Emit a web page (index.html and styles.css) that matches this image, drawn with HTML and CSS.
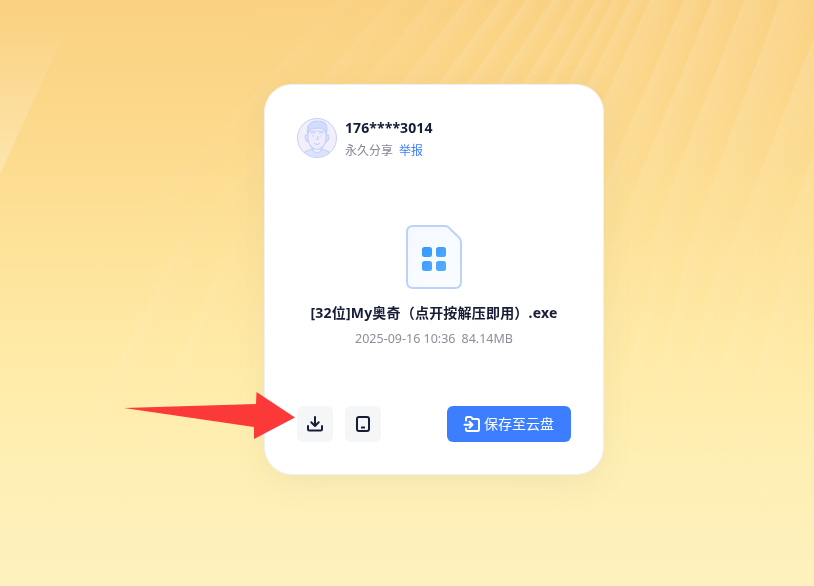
FILE: index.html
```html
<!DOCTYPE html>
<html lang="zh-CN">
<head>
<meta charset="utf-8">
<title>永久分享</title>
<link rel="stylesheet" href="styles.css">
</head>
<body>
<svg class="backdrop" viewBox="0 0 814 586" preserveAspectRatio="none" aria-hidden="true">
  <defs>
    <linearGradient id="ray"><stop stop-color="#fff" stop-opacity=".13"/><stop offset="1" stop-color="#fff" stop-opacity="0"/></linearGradient>
    <linearGradient id="edge" x1="0" y1="0" x2="0" y2="1">
      <stop offset=".12" stop-color="#fff" stop-opacity="0"/>
      <stop offset="1" stop-color="#fff" stop-opacity=".26"/>
    </linearGradient>
    <linearGradient id="topFade" x1="0" y1="0" x2="0" y2="1"><stop stop-color="#fff"/><stop offset=".2" stop-color="#eee"/><stop offset=".55" stop-color="#000"/></linearGradient>
    <linearGradient id="lowFade" x1="0" y1="0" x2="0" y2="1"><stop offset=".32" stop-color="#000"/><stop offset=".52" stop-color="#888"/><stop offset=".9" stop-color="#000"/></linearGradient>
    <mask id="topMask"><rect width="814" height="586" fill="url(#topFade)"/></mask>
    <mask id="lowMask"><rect width="814" height="586" fill="url(#lowFade)"/></mask>
  </defs>
  <path d="M0 0H72L66 30L0 174Z" fill="url(#edge)"/>
  <g mask="url(#topMask)" fill="url(#ray)">
    <rect width="30" height="400" transform="matrix(1 0 -.9 1 338 0)" opacity=".35"/>
    <rect width="34" height="400" transform="matrix(1 0 -.86 1 390 0)" opacity=".45"/>
    <rect width="30" height="400" transform="matrix(1 0 -.82 1 430 0)" opacity=".55"/>
    <rect width="26" height="400" transform="matrix(1 0 -.78 1 466 0)" opacity=".8"/>
    <rect width="20" height="400" transform="matrix(1 0 -.73 1 500 0)"/>
    <rect width="18" height="400" transform="matrix(1 0 -.7 1 526 0)"/>
    <rect width="18" height="400" transform="matrix(1 0 -.66 1 552 0)"/>
    <rect width="16" height="400" transform="matrix(1 0 -.62 1 575 0)"/>
    <rect width="14" height="400" transform="matrix(1 0 -.58 1 596 0)"/>
    <rect width="14" height="400" transform="matrix(1 0 -.54 1 613 0)"/>
    <rect width="20" height="400" transform="matrix(1 0 -.5 1 630 0)"/>
    <rect width="34" height="400" transform="matrix(1 0 -.46 1 650 0)"/>
    <rect width="28" height="400" transform="matrix(1 0 -.43 1 684 0)"/>
    <rect width="32" height="400" transform="matrix(1 0 -.41 1 712 0)"/>
    <rect width="36" height="400" transform="matrix(1 0 -.39 1 744 0)"/>
    <rect width="46" height="400" transform="matrix(1 0 -.37 1 780 0)"/>
    <rect width="48" height="400" transform="matrix(1 0 -.4 1 829 0)"/>
    <rect width="50" height="400" transform="matrix(1 0 -.38 1 872 0)"/>
  </g>
  <g mask="url(#lowMask)" fill="url(#ray)">
    <rect width="30" height="586" transform="matrix(1 0 -.5 1 300 0)"/>
    <rect width="30" height="586" transform="matrix(1 0 -.45 1 340 0)"/>
    <rect width="26" height="586" transform="matrix(1 0 -.25 1 690 0)"/>
    <rect width="26" height="586" transform="matrix(1 0 -.25 1 720 0)"/>
    <rect width="28" height="586" transform="matrix(1 0 -.26 1 754 0)"/>
    <rect width="30" height="586" transform="matrix(1 0 -.27 1 788 0)"/>
    <rect width="34" height="586" transform="matrix(1 0 -.28 1 824 0)"/>
    <rect width="36" height="586" transform="matrix(1 0 -.29 1 864 0)"/>
  </g>
</svg>

<main class="card">
  <header class="owner">
    <svg class="avatar" viewBox="0 0 40 40" aria-hidden="true">
      <clipPath id="disc"><circle cx="20" cy="20" r="19.5"/></clipPath>
      <circle cx="20" cy="20" r="19.5" fill="#f0effb"/>
      <g clip-path="url(#disc)" fill="#efedfb" stroke="#c4d0fb" stroke-width="1.2" stroke-linejoin="round" stroke-linecap="round">
        <path d="M5 37Q8 33 15 31Q20 37 25 31Q32 33 35 37V41H5Z" fill="#dde3fc"/>
        <path d="M15.500 29V32Q20 38 24.500 32V29" fill="#f0effb"/>
        <path d="M11 17Q7.500 16 8.200 20Q8.800 23.500 11.500 24M29 17Q32.500 16 31.800 20Q31.200 23.500 28.500 24" fill="#dde3fc"/>
        <path d="M11 13V21Q12 30.500 20 31.500Q28 30.500 29 21V13Z"/>
        <path d="M10.800 16Q9.500 10 12 7Q15 3 21 3.200Q28 3.200 29.500 8Q30.500 12 29.200 16L28 11.500Q24 9.500 17 10.500Q13 10.500 12 12.500Z" fill="#d3dcfc"/>
        <path d="M14 15Q16 13.800 17.500 15M22.500 15Q24 13.800 26 15M15.700 17.800H16.300M23.700 17.800H24.300M20.500 18.500L21 21.500H19.500M17.500 25.500Q20 27.500 22.500 25.500" fill="none"/>
      </g>
      <circle cx="20" cy="20" r="19.5" fill="none" stroke="#c5d0fb"/>
    </svg>
    <div class="owner-text">
      <div class="owner-name">176****3014</div>
      <div class="owner-meta"><span>永久分享</span><a class="report">举报</a></div>
    </div>
  </header>

  <section class="file">
    <svg class="file-icon" viewBox="0 0 56 64" aria-hidden="true">
      <defs>
        <linearGradient id="paper" x2="1" y2="1"><stop stop-color="#f5f9ff"/><stop offset="1" stop-color="#fafdff"/></linearGradient>
        <linearGradient id="tile" gradientUnits="userSpaceOnUse" x1="16" y1="22" x2="40" y2="46"><stop stop-color="#3399ff"/><stop offset="1" stop-color="#58acff"/></linearGradient>
      </defs>
      <path d="M7 1H39Q41 1 42.500 2.200L53 12.500Q55 14.500 55 17V57Q55 63 49 63H7Q1 63 1 57V7Q1 1 7 1Z" fill="url(#paper)" stroke="#bdd2fa" stroke-width="2"/>
      <g fill="url(#tile)">
        <rect x="16" y="22" width="10" height="10" rx="2.500"/>
        <rect x="30" y="22" width="10" height="10" rx="2.500"/>
        <rect x="16" y="36" width="10" height="10" rx="2.500"/>
        <rect x="30" y="36" width="10" height="10" rx="2.500"/>
      </g>
    </svg>
    <div class="file-name">[32位]My奥奇（点开按解压即用）.exe</div>
    <div class="file-meta"><span>2025-09-16 10:36</span><span>84.14MB</span></div>
  </section>

  <footer class="actions">
    <button class="tool" aria-label="下载">
      <svg viewBox="0 0 18 18"><path d="M9 2V10.700M5.300 7.300L9 11L12.700 7.300M2 11V14Q2 15.500 3.500 15.500H14.500Q16 15.500 16 14V11"/></svg>
    </button>
    <button class="tool" aria-label="手机">
      <svg viewBox="0 0 18 18"><rect x="3" y="2" width="12" height="14" rx="2"/><path d="M7 12.500H11" stroke-linecap="butt"/></svg>
    </button>
    <button class="save">
      <svg viewBox="0 0 18 18"><path d="M3 5.500V3.500Q3 2 4.500 2H7.500Q8.500 2 9 3L9.500 4H14.500Q16 4 16 5.500V14.500Q16 16 14.500 16H4.500Q3 16 3 14.500V13.500M1.500 9.800H9M6.500 6.800L9.500 9.800L6.500 12.800"/></svg>
      <span>保存至云盘</span>
    </button>
  </footer>
</main>

<svg class="pointer" viewBox="0 0 172 47" aria-hidden="true"><path d="M0 16L132 12L132.500 0L171 25.500L130 47L130 35Z"/></svg>
</body>
</html>
```
FILE: styles.css
```css
* { box-sizing: border-box; }

body {
  margin: 0;
  width: 814px;
  height: 586px;
  overflow: hidden;
  position: relative;
  padding: 84px 0 0 264px;
  font-family: "Noto Sans", "Noto Sans CJK SC", sans-serif;
  color: #181d37;
  background: linear-gradient(180deg, #fad182 0%, #fcd98c 22%, #fee49b 45%, #ffecaa 65%, #feefb4 80%, #fff1be 100%);
}

.backdrop {
  position: absolute;
  inset: 0;
  width: 100%;
  height: 100%;
}

.card {
  position: relative;
  display: flex;
  flex-direction: column;
  width: 340px;
  height: 391px;
  padding: 33px 32px 32px;
  border: 1px solid #edf0f7;
  border-radius: 28px;
  background: #fff;
  box-shadow: 0 8px 32px rgba(120, 130, 110, .09);
}

.owner {
  display: flex;
  gap: 8px;
  height: 40px;
}

.avatar { width: 40px; height: 40px; }

.owner-name {
  height: 20px;
  font-size: 14px;
  line-height: 20px;
  font-weight: 700;
  letter-spacing: .1px;
}

.owner-meta {
  display: flex;
  gap: 6px;
  margin-top: 3px;
  font-size: 12px;
  line-height: 20px;
  color: #858796;
}

.report { color: #3d7eff; }

.file {
  display: flex;
  flex-direction: column;
  align-items: center;
  margin-top: 67px;
}

.file-icon { width: 56px; height: 64px; }

.file-name {
  margin-top: 13px;
  font-size: 14px;
  line-height: 22px;
  font-weight: 700;
  letter-spacing: .2px;
  white-space: nowrap;
}

.file-meta {
  display: flex;
  gap: 6px;
  margin-top: 5px;
  font-size: 12.5px;
  line-height: 20px;
  color: #8c8e9b;
}

.actions {
  display: flex;
  gap: 12px;
  margin-top: auto;
}

.tool,
.save {
  display: flex;
  align-items: center;
  justify-content: center;
  height: 36px;
  padding: 0;
  border: 0;
  border-radius: 6px;
}

.tool {
  width: 36px;
  background: #f5f6f8;
  color: #181d37;
}

.save {
  width: 124px;
  gap: 3px;
  margin-left: auto;
  padding: 0 1px 0 0;
  background: #3d7eff;
  color: #fff;
  font: 14px/20px "Noto Sans CJK SC", sans-serif;
}

.save span { padding-bottom: 2px; }

.actions svg {
  width: 18px;
  height: 18px;
  fill: none;
  stroke: currentColor;
  stroke-width: 2;
  stroke-linecap: round;
  stroke-linejoin: round;
}

.pointer {
  position: absolute;
  left: 124px;
  top: 392px;
  width: 172px;
  height: 47px;
  fill: #fc3939;
}
```
